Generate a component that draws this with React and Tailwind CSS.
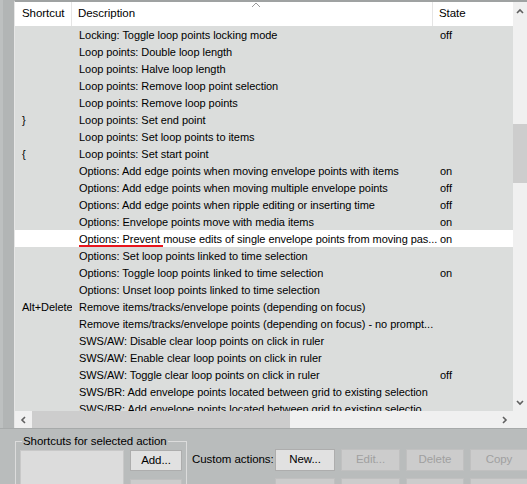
import React from "react";

const rows = [
  ["", "Locking: Toggle loop points locking mode", "off"],
  ["", "Loop points: Double loop length", ""],
  ["", "Loop points: Halve loop length", ""],
  ["", "Loop points: Remove loop point selection", ""],
  ["", "Loop points: Remove loop points", ""],
  ["}", "Loop points: Set end point", ""],
  ["", "Loop points: Set loop points to items", ""],
  ["{", "Loop points: Set start point", ""],
  ["", "Options: Add edge points when moving envelope points with items", "on"],
  ["", "Options: Add edge points when moving multiple envelope points", "off"],
  ["", "Options: Add edge points when ripple editing or inserting time", "off"],
  ["", "Options: Envelope points move with media items", "on"],
  ["", "Options: Prevent mouse edits of single envelope points from moving pas...", "on", true],
  ["", "Options: Set loop points linked to time selection", ""],
  ["", "Options: Toggle loop points linked to time selection", "on"],
  ["", "Options: Unset loop points linked to time selection", ""],
  ["Alt+Delete", "Remove items/tracks/envelope points (depending on focus)", ""],
  ["", "Remove items/tracks/envelope points (depending on focus) - no prompt...", ""],
  ["", "SWS/AW: Disable clear loop points on click in ruler", ""],
  ["", "SWS/AW: Enable clear loop points on click in ruler", ""],
  ["", "SWS/AW: Toggle clear loop points on click in ruler", "off"],
  ["", "SWS/BR: Add envelope points located between grid to existing selection", ""],
  ["", "SWS/BR: Add envelope points located between grid to existing selectio", ""],
];

function Chevron({ dir }) {
  const d = {
    up: "M1 5 L4 2 L7 5",
    down: "M1 2 L4 5 L7 2",
    left: "M5 1 L2 4 L5 7",
    right: "M2 1 L5 4 L2 7",
  }[dir];
  return (
    <svg width="8" height="8" viewBox="0 0 8 8">
      <path d={d} fill="none" stroke="#606060" strokeWidth="1.6" />
    </svg>
  );
}

function Btn({ children, disabled, w }) {
  return (
    <div
      className={`h-[22px] flex items-center justify-center border whitespace-nowrap ${
        disabled
          ? "bg-[#cccccc] border-[#c0c0c0] text-[#a0a0a0]"
          : "bg-[#e1e1e1] border-[#adadad] text-black"
      }`}
      style={{ width: w }}
    >
      {children}
    </div>
  );
}

export default function App() {
  return (
    <div
      className="w-[527px] h-[484px] overflow-hidden bg-[#b9bcbc] text-[11px] tracking-[-0.05px] text-black flex flex-col"
      style={{ fontFamily: '"Liberation Sans", Arial, sans-serif' }}
    >
      <div className="flex h-[428px]">
        <div className="w-[14px] flex shrink-0">
          <div className="w-[3px] bg-[#bdc0c0]" />
          <div className="flex-1 bg-[#b2b5b5]" />
        </div>
        <div className="flex-1 flex flex-col border-l border-[#e6e6e6] border-t-2 border-t-[#9fa2a2] bg-[#f0f0f0] min-w-0">
          <div className="flex flex-1 min-h-0">
            <div className="flex-1 flex flex-col bg-[#dbdddc] overflow-hidden">
              <div className="h-[24px] bg-white flex items-center relative shrink-0 text-[11.5px]">
                <div className="w-[57px] pl-[7px] h-full flex items-center border-r border-[#e5e5e5]">
                  Shortcut
                </div>
                <div className="w-[361px] pl-[6px] h-full flex items-center border-r border-[#e5e5e5]">
                  Description
                </div>
                <div className="pl-[6px]">State</div>
                <div className="absolute left-[236px] top-0">
                  <svg width="10" height="6" viewBox="0 0 10 6">
                    <path d="M1 5 L5 1 L9 5" fill="none" stroke="#9a9a9a" strokeWidth="1" />
                  </svg>
                </div>
              </div>
              <div className="flex flex-col">
                {rows.map(([s, d, st, sel], i) => (
                  <div
                    key={i}
                    className={`h-[17px] pt-[1px] flex items-center whitespace-nowrap shrink-0 ${sel ? "bg-white" : ""}`}
                  >
                    <div className="w-[57px] pl-[7px] shrink-0 overflow-hidden">{s}</div>
                    <div className="w-[361px] pl-[7px] shrink-0 relative">
                      {d}
                      {sel && (
                        <div className="absolute left-[7px] top-[14px] w-[84px] h-[2px] bg-[#e8141c]" />
                      )}
                    </div>
                    <div className="pl-[7px]">{st}</div>
                  </div>
                ))}
              </div>
            </div>
            <div className="w-[14px] shrink-0 flex flex-col items-center bg-[#f0f0f0]">
              <div className="h-[17px] flex items-center justify-center pt-[2px]">
                <Chevron dir="up" />
              </div>
              <div className="h-[105px]" />
              <div className="w-full h-[59px] bg-[#cdcdcd]" />
              <div className="flex-1" />
              <div className="h-[17px] flex items-center justify-center">
                <Chevron dir="down" />
              </div>
            </div>
          </div>
          <div className="h-[17px] flex items-center bg-[#f0f0f0] shrink-0">
            <div className="w-[17px] flex items-center justify-center">
              <Chevron dir="left" />
            </div>
            <div className="w-[258px] h-full bg-[#cdcdcd]" />
            <div className="flex-1" />
            <div className="w-[17px] flex items-center justify-center mr-[14px]">
              <Chevron dir="right" />
            </div>
          </div>
        </div>
      </div>
      <div className="flex-1 border-t border-[#a7aaaa] flex pl-[15px] pt-[12px] relative text-[11.5px]">
        <div className="w-[172px] h-[60px] border border-[#dcdcdc] relative shrink-0 pt-[8px] pl-[4px] flex gap-[6px]">
          <div className="absolute left-[6px] top-[-8px] px-[1px] bg-[#b9bcbc] leading-[14px] whitespace-nowrap">
            Shortcuts for selected action
          </div>
          <div className="w-[104px] h-[60px] bg-[#dcdcdc] border border-[#c8c8c8]" />
          <div className="flex flex-col gap-[8px]">
            <Btn w={52}>Add...</Btn>
            <Btn w={52} disabled>&nbsp;</Btn>
          </div>
        </div>
        <div className="flex flex-col pt-[8px] pl-[5px]">
          <div className="flex items-center gap-[6px]">
            <div className="w-[77px] whitespace-nowrap">Custom actions:</div>
            <Btn w={60}>New...</Btn>
            <Btn w={59} disabled>Edit...</Btn>
            <Btn w={58} disabled>Delete</Btn>
            <Btn w={58} disabled>Copy</Btn>
          </div>
          <div className="flex items-center gap-[6px] mt-[7px] pl-[83px]">
            <Btn w={60} disabled>&nbsp;</Btn>
            <Btn w={59} disabled>&nbsp;</Btn>
            <Btn w={58} disabled>&nbsp;</Btn>
            <Btn w={58} disabled>&nbsp;</Btn>
          </div>
        </div>
      </div>
    </div>
  );
}
